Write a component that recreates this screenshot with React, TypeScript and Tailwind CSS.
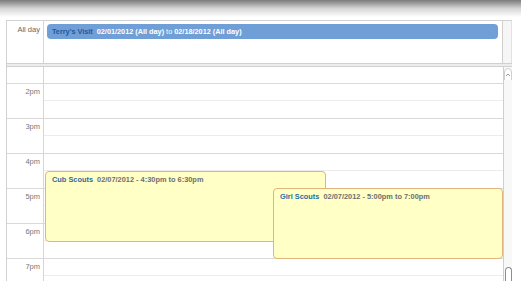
import React from 'react';

const hours = ['2pm', '3pm', '4pm', '5pm', '6pm', '7pm'];

const Event: React.FC<{ title: string; when: string; className: string }> = ({ title, when, className }) => (
  <div
    className={`absolute rounded-[4px] border border-[#e0b47a] bg-[#ffffc6] pl-[6px] pt-[3px] text-[7.4px] leading-[9px] font-bold whitespace-nowrap ${className}`}
  >
    <span className="text-[#2d6d9f]">{title}</span>
    <span className="ml-[4px] text-[#6e6e6e]">{when}</span>
  </div>
);

export default function App() {
  return (
    <div className="h-[281px] w-[521px] overflow-hidden bg-white font-['Liberation_Sans',Arial,sans-serif]">
      <div className="h-[17px] bg-linear-to-b from-[#7b7b7b] via-[#d6d6d6] to-white" />
      <div className="h-[3px]" />
      <div className="ml-[6px] w-[506px] border-l border-t border-[#d2d2d2]">
        {/* all-day row */}
        <div className="flex h-[42px]">
          <div className="w-[37px] border-r border-[#d6d6d6] pr-[3px] pt-[4px] text-right text-[7.5px] leading-[9px] text-[#666]">
            All day
          </div>
          <div className="w-[460px] border-r border-[#cfcfcf] pl-[3px] pr-[4px] pt-[3px]">
            <div className="h-[15px] rounded-[4px] bg-[#6f9fd6] pl-[5px] pt-[3px] text-[7.3px] leading-[9px] font-bold whitespace-nowrap text-white">
              <span className="text-[#1d5aa0]">Terry's Visit</span>
              <span className="ml-[4px]">02/01/2012 (All day)</span>
              <span className="font-normal"> to </span>
              <span>02/18/2012 (All day)</span>
            </div>
          </div>
          <div className="w-[9px] border-r border-[#e2e2e2] bg-[#f6f6f6]" />
        </div>
        {/* divider */}
        <div className="h-[4px] border-b border-t border-[#d0d0d0] bg-[#ececec]" />
        {/* time grid */}
        <div className="relative flex h-[214px]">
          <div className="w-[496px]">
            <div className="flex h-[16px]">
              <div className="w-[37px] border-r border-[#d6d6d6]" />
              <div className="flex-1" />
            </div>
            {hours.map((h) => (
              <div key={h} className="flex h-[35px] border-t border-[#d9d9d9]">
                <div className="w-[37px] border-r border-[#d6d6d6] pr-[3px] pt-[3px] text-right text-[7.5px] leading-[9px] text-[#777]">
                  {h}
                </div>
                <div className="flex-1">
                  <div className="h-[17px] border-b border-[#ececec]" />
                </div>
              </div>
            ))}
          </div>
          {/* scrollbar */}
          <div className="flex w-[9px] flex-col justify-between border-l border-[#cfcfcf] bg-[#f8f8f8]">
            <svg width="8" height="12" viewBox="0 0 8 12" className="mt-[1px]">
              <path d="M0.5 12 V4 Q0.5 0.5 4 0.5 Q7.5 0.5 7.5 4 V12" fill="#fdfdfd" stroke="#cfcfcf" />
              <path d="M2 8 L4 6 L6 8" fill="none" stroke="#9a9a9a" strokeWidth="1" />
            </svg>
            <div className="mx-auto h-[14px] w-[7px] rounded-t-[4px] border border-b-0 border-[#8e8e8e] bg-white" />
          </div>
          <Event
            title="Cub Scouts"
            when="02/07/2012 - 4:30pm to 6:30pm"
            className="left-[38px] top-[104px] h-[71px] w-[281px]"
          />
          <Event
            title="Girl Scouts"
            when="02/07/2012 - 5:00pm to 7:00pm"
            className="left-[266px] top-[121px] h-[71px] w-[230px]"
          />
        </div>
      </div>
    </div>
  );
}
